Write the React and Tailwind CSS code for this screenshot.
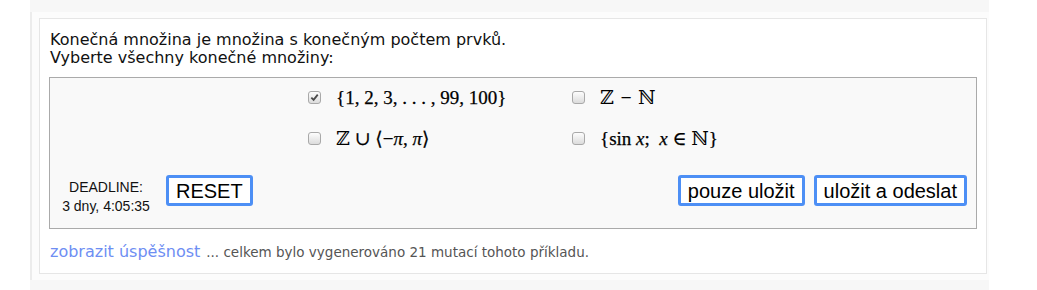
import React, { useState } from 'react';

const Bb = ({ children }) => (
  <span className="[-webkit-text-stroke:0px_black] font-normal">{children}</span>
);

const options = [
  { id: 'a', tex: (
    <span>{'{'}1, 2, 3, . . . , 99, 100{'}'}</span>
  ) },
  { id: 'b', tex: (
    <span><Bb>ℤ</Bb> <span className="mx-[2px]">−</span> <Bb>ℕ</Bb></span>
  ) },
  { id: 'c', tex: (
    <span><Bb>ℤ</Bb> ∪ ⟨−<i>π</i>, <i>π</i>⟩</span>
  ) },
  { id: 'd', tex: (
    <span>{'{'}sin <i>x</i>;&nbsp;&nbsp;<i>x</i> ∈ <Bb>ℕ</Bb>{'}'}</span>
  ) },
];

function Check({ checked, onClick }) {
  return (
    <span
      onClick={onClick}
      className="w-[13px] h-[13px] rounded-[3px] border border-[#a9a9a9] bg-gradient-to-b from-[#fdfdfd] to-[#dcdcdc] flex items-center justify-center shrink-0 cursor-pointer"
    >
      {checked && (
        <svg width="9" height="9" viewBox="0 0 10 10">
          <path d="M1.5 5.2 L4 7.6 L8.6 1.8" fill="none" stroke="#4a4a4a" strokeWidth="2" />
        </svg>
      )}
    </span>
  );
}

function Btn({ children }) {
  return (
    <button className="h-[31px] px-[7px] bg-white border-[3px] border-[#4d8ff5] rounded-[3px] text-[20px] leading-none text-black font-['Liberation_Sans',Arial,sans-serif]">
      {children}
    </button>
  );
}

export default function App() {
  const [checked, setChecked] = useState({ a: true, b: false, c: false, d: false });
  const toggle = (id) => setChecked((s) => ({ ...s, [id]: !s[id] }));

  return (
    <div className="w-full h-[290px] bg-white font-['DejaVu_Sans',Verdana,sans-serif]">
      <div className="ml-[30px] w-[959px] h-[290px] bg-[#f7f7f7] pt-[12px]">
        <div className="border-l-[2px] border-[#ececec] bg-[#fcfcfc] pt-[6px] pl-[7px] pr-[2px] pb-[6px]">
          <div className="h-[256px] border border-[#e6e6e6] bg-white px-[9px] pt-[12px]">
            <div className="pl-px text-[16px] leading-[18px] text-[#111]">
              <p>Konečná množina je množina s konečným počtem prvků.</p>
              <p>Vyberte všechny konečné množiny:</p>
            </div>

            <div className="mt-[10px] h-[152px] border border-[#aaaaaa] bg-[#f9f9f9] pt-[8px]">
              <div className="ml-[258px] grid grid-cols-[264px_220px] gap-y-[19px]">
                {options.map((o) => (
                  <div key={o.id} className="flex items-center h-[22px]">
                    <Check checked={checked[o.id]} onClick={() => toggle(o.id)} />
                    <span className="ml-[15px] text-[19px] leading-none text-black whitespace-nowrap [-webkit-text-stroke:0.25px_black] font-['Liberation_Serif','DejaVu_Serif',serif]">
                      {o.tex}
                    </span>
                  </div>
                ))}
              </div>

              <div className="mt-[26px] flex items-start pr-[9px]">
                <div className="mt-[3px] w-[112px] text-center text-[14px] leading-[19px] text-[#111] font-['Liberation_Sans',Arial,sans-serif]">
                  <div>DEADLINE:</div>
                  <div>3 dny, 4:05:35</div>
                </div>
                <div className="ml-[4px]">
                  <Btn>RESET</Btn>
                </div>
                <div className="ml-auto flex gap-[9px]">
                  <Btn>pouze uložit</Btn>
                  <Btn>uložit a odeslat</Btn>
                </div>
              </div>
            </div>

            <div className="mt-[11px] pl-px flex items-baseline whitespace-nowrap">
              <a href="#" className="text-[16px] text-[#6e8ef3]">zobrazit úspěšnost</a>
              <span className="ml-[6px] text-[13.5px] text-[#555]">... celkem bylo vygenerováno 21 mutací tohoto příkladu.</span>
            </div>
          </div>
        </div>
      </div>
    </div>
  );
}
